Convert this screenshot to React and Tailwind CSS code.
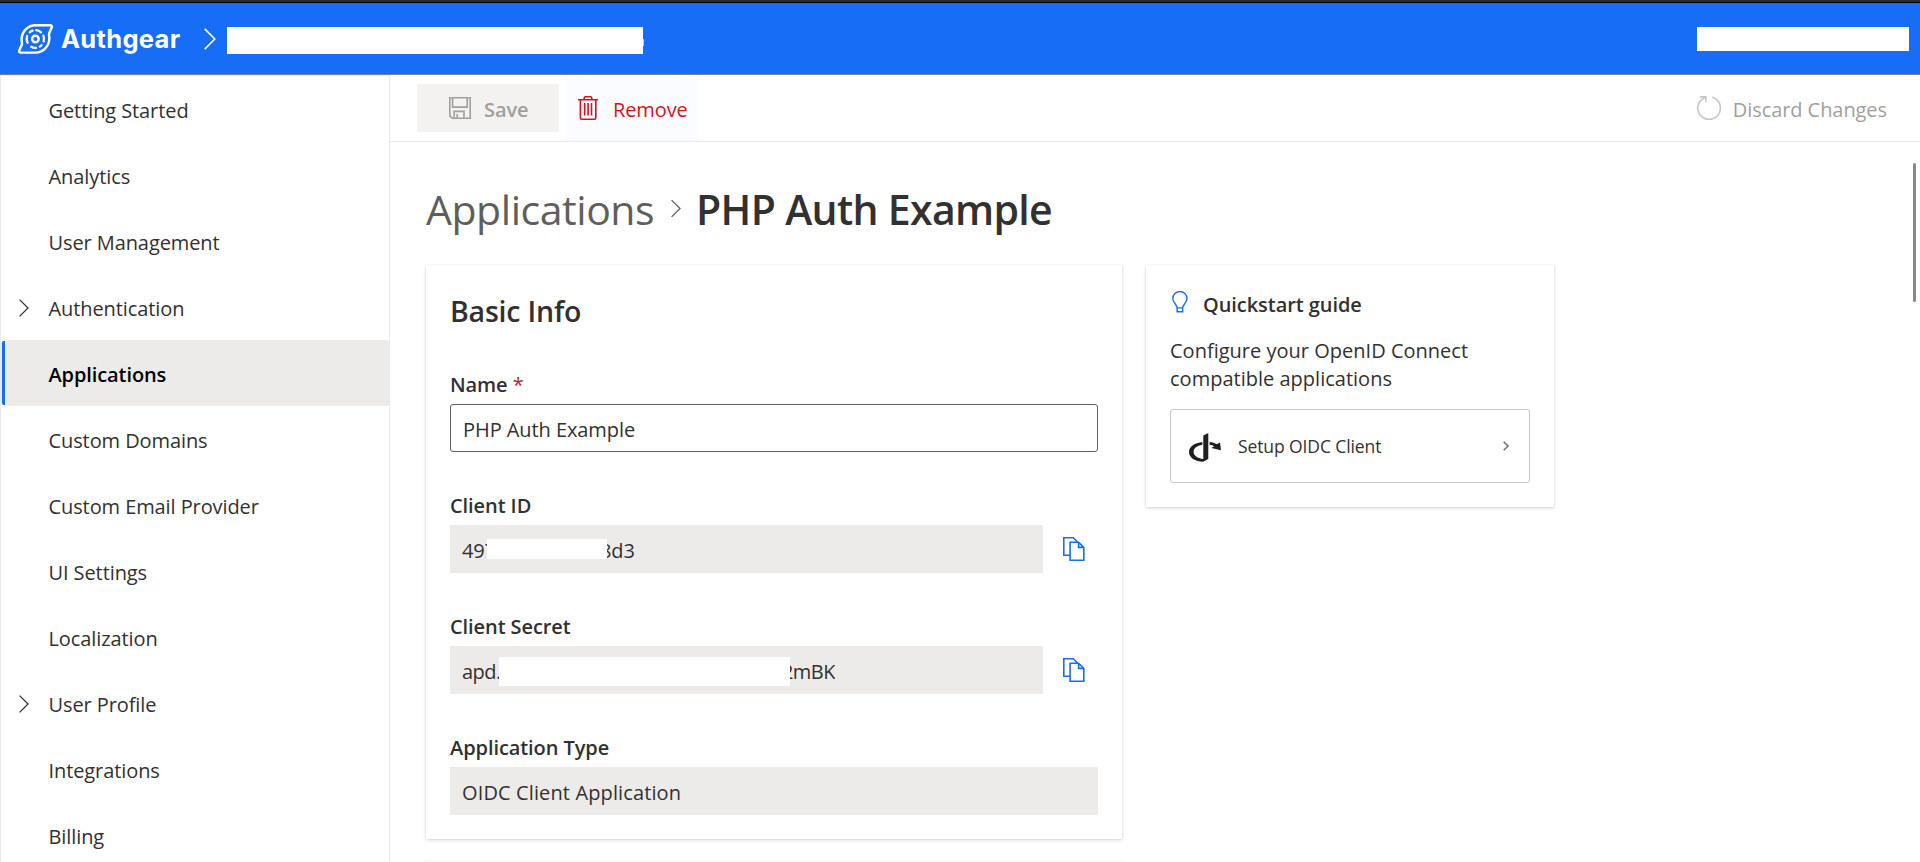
const NAV = [
  { label: "Getting Started" },
  { label: "Analytics" },
  { label: "User Management" },
  { label: "Authentication", expandable: true },
  { label: "Applications", active: true },
  { label: "Custom Domains" },
  { label: "Custom Email Provider" },
  { label: "UI Settings" },
  { label: "Localization" },
  { label: "User Profile", expandable: true },
  { label: "Integrations" },
  { label: "Billing" },
];

function LogoMark() {
  return (
    <svg className="h-[30px] w-[35px]" viewBox="0 0 35 30" fill="none" stroke="#fff">
      <path
        strokeWidth="2.4"
        d="M17.5 1.3H32.1c1.5 0 2.2 1 1.6 2.3L31.2 9.3c-.6 1.6.3 3.4.1 5.7C30.9 22.6 25 28.6 17.4 28.6H2.7c-1.4 0-2-1.1-1.4-2.3L3.8 20.8c.6-1.6-.4-3.6-.2-6C4.1 7.2 10 1.3 17.5 1.3Z"
      />
      <circle cx="17.4" cy="15" r="3.3" strokeWidth="2.4" />
      <path
        strokeWidth="2.3"
        strokeLinecap="round"
        d="M11.8 8.3A8.8 8.8 0 0 1 14.6 6.7M18.2 6.2A8.8 8.8 0 0 1 23 8.3M25.4 11.6A8.8 8.8 0 0 1 25.7 17.4M23.5 21.2A8.8 8.8 0 0 1 21.8 22.6M18 23.8A8.8 8.8 0 0 1 13.2 22.7M9.6 18.8A8.8 8.8 0 0 1 9.1 12"
      />
    </svg>
  );
}

function Chevron({ className, width = 1.3 }) {
  return (
    <svg className={className} viewBox="0 0 10 18" fill="none" stroke="currentColor" strokeWidth={width}>
      <path d="M.6.6 9 9 .6 17.4" />
    </svg>
  );
}

function SaveIcon() {
  return (
    <svg className="h-[22px] w-[22px]" viewBox="0 0 22 22" fill="none" stroke="currentColor" strokeWidth="1.6">
      <path d="M.8.8H21.2V21.2H3.2L.8 18.8ZM3.6.8V10.1H18.2V.8M5.1 21.2V14.4H15V21.2M8.2 21.2V17" />
    </svg>
  );
}

function TrashIcon() {
  return (
    <svg className="h-6 w-5" viewBox="0 0 20 24" fill="none" stroke="currentColor" strokeWidth="1.6">
      <path d="M0 3.7H20M6.2 3.7V2.2Q6.2.8 7.6.8H12.4Q13.8.8 13.8 2.2V3.7M2.4 3.7V21.8Q2.4 23.2 3.8 23.2H16.4Q17.8 23.2 17.8 21.8V3.7M6.7 7V19.6M10.1 7V19.6M13.5 7V19.6" />
    </svg>
  );
}

function DiscardIcon() {
  return (
    <svg className="h-6 w-6" viewBox="0 0 24 24" fill="none" stroke="currentColor" strokeWidth="1.6">
      <path d="M15.2 1.2A11.3 11.3 0 1 1 4.2 4L8.7.9M2.8.9H8.9V6.2" />
    </svg>
  );
}

function CopyIcon() {
  return (
    <svg className="h-6 w-[22px]" viewBox="0 0 22 24" fill="none" stroke="#176df3" strokeWidth="1.6">
      <path d="M7 18.2H.8V.8H10.4L14.8 5.2M7.1 5.2H15.6L20.8 10.4V23.2H7.1ZM15.6 5.2V10.4H20.8" />
    </svg>
  );
}

function BulbIcon() {
  return (
    <svg className="h-[22px] w-4" viewBox="0 0 16 22" fill="none" stroke="#176df3" strokeWidth="1.4">
      <path d="M5.1 20.7V16.6C4.7 13.2.8 11.7.8 7.6A7.1 7.1 0 0 1 15 7.6C15 11.7 11.1 13.2 10.7 16.6V20.7ZM5.1 16.9H10.7" />
    </svg>
  );
}

function OpenIdIcon() {
  return (
    <svg className="h-[29px] w-8" viewBox="0 0 32 29" fill="#1f1f1f">
      <path d="M14.3 2.6 19.3 0V26L14.3 28.8C6 28.8 0 24.6 0 19.1 0 13.9 5.6 9.8 13.4 9.1V11.8C8 12.6 4.6 15.3 4.6 18.9 4.6 22.4 8.5 25.2 14.3 25.9Z" />
      <path d="M20.6 9.1C23.4 9.4 25.8 10.1 27.9 11.3L31 9.4 32 17.2 22.4 15 25.2 13.2C24 12.5 22.3 12 20.6 11.7Z" />
    </svg>
  );
}

function Label({ children }) {
  return <div className="mb-1.5 h-7 pt-px leading-7 font-semibold tracking-[-0.08px]">{children}</div>;
}

/* Read-only value whose middle part is covered by a blank block */
function MaskedField({ start, end, startClass, endClass, maskClass }) {
  return (
    <div className="flex">
      <div className="flex h-12 w-[593px] items-start bg-[#ecebe9] pl-3">
        <span className={`h-12 overflow-hidden pt-0.5 leading-[48px] whitespace-nowrap ${startClass}`}>{start}</span>
        <span className={`bg-white ${maskClass}`} />
        <span className={`flex h-12 justify-end overflow-hidden pt-0.5 leading-[48px] whitespace-nowrap ${endClass}`}>
          {end}
        </span>
      </div>
      <div className="mt-3 ml-5">
        <CopyIcon />
      </div>
    </div>
  );
}

const CARD = "bg-white shadow-[0_1.6px_3.6px_0_rgba(0,0,0,0.132),0_0.3px_0.9px_0_rgba(0,0,0,0.108),0_0_1.5px_0_rgba(0,0,0,0.12)]";

export default function App() {
  return (
    <div className="flex h-[862px] w-[1920px] flex-col overflow-hidden bg-white font-['Open_Sans','Noto_Sans',sans-serif] text-[20px] text-[#323130]">
      <div className="h-[3px] shrink-0 border-b border-black bg-[#2b2b2e]" />
      <header className="flex h-[72px] shrink-0 items-start border-b border-[#808080] bg-[#176df5] pl-[18px] text-white">
        <div className="mt-[21px]">
          <LogoMark />
        </div>
        <div className="mt-[18px] ml-2 w-[119px] font-[Inter,sans-serif] text-[25.5px] leading-[36px] font-bold tracking-[0.3px]">
          Authgear
        </div>
        <Chevron className="mt-[25px] ml-[24px] h-[22px] w-[12px]" />
        <div className="mt-6 ml-[11px] h-[27px] w-[416px] bg-white" />
        <div className="mt-9 h-[7px] w-px bg-[#b8d2fb]" />
        <div className="mt-6 mr-[11px] ml-auto h-6 w-[212px] bg-white" />
      </header>

      <div className="flex min-h-0 flex-1">
        <nav className="flex w-[390px] shrink-0 flex-col border border-b-0 border-[#eaeaea]">
          {NAV.map((item) => (
            <a
              key={item.label}
              className={
                item.active
                  ? "flex h-[66px] shrink-0 items-center rounded-[3px] bg-[#ecebe9] pl-px font-semibold tracking-[-0.1px] text-black"
                  : "flex h-[66px] shrink-0 items-center pl-px tracking-[-0.09px]"
              }
            >
              {item.active ? (
                <span className="h-16 w-[3px] rounded-l-[2px] bg-[#176df5]" />
              ) : (
                <span className="w-[3px]" />
              )}
              <span className="flex w-[43.5px] pt-0.5 pl-3.5">
                {item.expandable && <Chevron className="h-[18px] w-[10px]" width={1.3} />}
              </span>
              <span className="pt-1">{item.label}</span>
            </a>
          ))}
        </nav>

        <main className="flex min-w-0 flex-1 flex-col">
          <div className="flex h-[67px] shrink-0 items-start border-b border-[#eaeaea] pl-[27px]">
            <button className="mt-[9px] flex h-12 w-[142px] items-center rounded-[3px] bg-[#f3f2f1] pl-8 font-semibold tracking-[-0.1px] text-[#a19f9d]">
              <SaveIcon />
              <span className="ml-[13px] pt-1">Save</span>
            </button>
            <button className="ml-1.5 flex h-[66px] w-[134px] items-center bg-[#fafcff] pl-[13px] tracking-[-0.1px] text-[#d9101c]">
              <TrashIcon />
              <span className="ml-[15px] pt-1">Remove</span>
            </button>
            <button className="mr-[33px] ml-auto flex h-[66px] items-center tracking-[-0.07px] text-[#a19f9d]">
              <span className="text-[#c8c6c4]">
                <DiscardIcon />
              </span>
              <span className="ml-3 pt-1">Discard Changes</span>
            </button>
          </div>

          <div className="flex min-h-0 flex-1 justify-between pt-[21px]">
            <div className="flex flex-col pt-[21px] pl-9">
              <div className="mb-[31px] flex h-[50px] shrink-0 items-center text-[41px] leading-[50px]">
                <span className="w-[228px] tracking-[-0.45px] whitespace-nowrap text-[#605e5c]">Applications</span>
                <Chevron className="mb-0.5 ml-[17px] h-[19px] w-[10px] text-[#605e5c]" />
                <span className="ml-[15px] font-semibold tracking-[-0.68px] whitespace-nowrap">PHP Auth Example</span>
              </div>

              <div className="flex items-start gap-6">
                <div className="flex w-[696px] flex-col gap-[22px]">
                  <section className={`h-[574px] px-6 pt-[26px] ${CARD}`}>
                    <h2 className="mb-[39px] h-10 text-[28.5px] leading-10 font-semibold tracking-[-0.2px]">Basic Info</h2>
                    <div className="flex flex-col gap-[39px]">
                      <div>
                        <Label>
                          Name <span className="font-normal text-[#a4262c]">*</span>
                        </Label>
                        <div className="h-12 rounded-[3px] border border-[#605e5c] pt-0.5 pl-3 leading-[46px] tracking-[-0.07px]">
                          PHP Auth Example
                        </div>
                      </div>
                      <div>
                        <Label>Client ID</Label>
                        <MaskedField
                          start="497"
                          end="8d3"
                          startClass="w-[25px] tracking-[-0.2px]"
                          endClass="w-[28px]"
                          maskClass="mt-3.5 h-5 w-[120px]"
                        />
                      </div>
                      <div>
                        <Label>Client Secret</Label>
                        <MaskedField
                          start="apd."
                          end="2mBK"
                          startClass="w-[37px] tracking-[-0.5px]"
                          endClass="w-[45px] tracking-[-0.5px]"
                          maskClass="mt-[11px] h-[29px] w-[291px]"
                        />
                      </div>
                      <div>
                        <Label>Application Type</Label>
                        <div className="h-12 bg-[#ecebe9] pt-0.5 pl-3 leading-[48px] tracking-[0.12px]">
                          OIDC Client Application
                        </div>
                      </div>
                    </div>
                  </section>
                  <section className={`h-40 ${CARD}`} />
                </div>

                <aside className={`h-[242px] w-[408px] px-6 pt-[26px] ${CARD}`}>
                  <div className="flex items-start">
                    <div className="ml-[2px]">
                      <BulbIcon />
                    </div>
                    <h3 className="ml-[15px] leading-[28px] font-semibold tracking-[-0.06px]">Quickstart guide</h3>
                  </div>
                  <p className="mt-[18px] leading-7 tracking-[0.01px]">
                    Configure your OpenID Connect
                    <br />
                    compatible applications
                  </p>
                  <a className="mt-4 flex h-[74px] w-[360px] items-center rounded-[3px] border border-[#c8c6c4] text-[17.5px] tracking-[-0.1px]">
                    <span className="ml-[18px] pt-[3px]">
                      <OpenIdIcon />
                    </span>
                    <span className="ml-[17px] pt-px">Setup OIDC Client</span>
                    <svg
                      className="mr-5 ml-auto h-[10px] w-[6px]"
                      viewBox="0 0 6 10"
                      fill="none"
                      stroke="#797775"
                      strokeWidth="1.6"
                    >
                      <path d="M.7.7 5 5 .7 9.3" />
                    </svg>
                  </a>
                </aside>
              </div>
            </div>
            <div className="mr-1 h-[139px] w-[3px] rounded-full bg-[#8a8a8a]" />
          </div>
        </main>
      </div>
    </div>
  );
}
